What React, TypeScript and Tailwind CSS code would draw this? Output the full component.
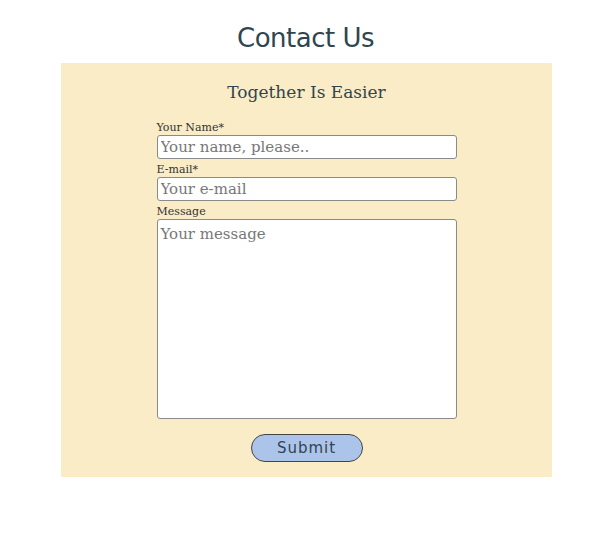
export default function App() {
  return (
    <div className="min-h-screen bg-white pt-[22px]">
      <h1 className="text-center text-[26px] leading-[32px] font-medium text-[#2f4550] font-['DejaVu_Sans',sans-serif] tracking-[-0.5px]">
        Contact Us
      </h1>
      <div className="ml-[61px] mt-[9px] w-[491px] h-[414px] bg-[#faecc6] pt-[16px] font-['DejaVu_Serif',serif]">
        <h2 className="text-center text-[17px] leading-[26px] text-[#2f4550]">Together Is Easier</h2>
        <form className="mx-auto mt-[15px] w-[300px] flex flex-col text-[#333]">
          <label className="text-[11px] leading-[15px]">Your Name*</label>
          <input
            className="h-[24px] w-full bg-white border border-[#8a8a8a] rounded-[3px] px-[3px] text-[15px] placeholder:text-[#777] outline-none"
            placeholder="Your name, please.."
          />
          <label className="mt-[3px] text-[11px] leading-[15px]">E-mail*</label>
          <input
            className="h-[24px] w-full bg-white border border-[#8a8a8a] rounded-[3px] px-[3px] text-[15px] placeholder:text-[#777] outline-none"
            placeholder="Your e-mail"
          />
          <label className="mt-[3px] text-[11px] leading-[15px]">Message</label>
          <textarea
            className="h-[200px] w-full bg-white border border-[#8a8a8a] rounded-[3px] px-[3px] py-[3px] text-[15px] placeholder:text-[#777] outline-none resize-none"
            placeholder="Your message"
          />
          <div className="mt-[15px] flex justify-center">
            <button
              type="button"
              className="w-[112px] h-[28px] rounded-full border border-[#444] bg-[#adc4ea] text-[15px] tracking-[1px] text-[#2f4550] font-['DejaVu_Sans',sans-serif]"
            >
              Submit
            </button>
          </div>
        </form>
      </div>
    </div>
  );
}
